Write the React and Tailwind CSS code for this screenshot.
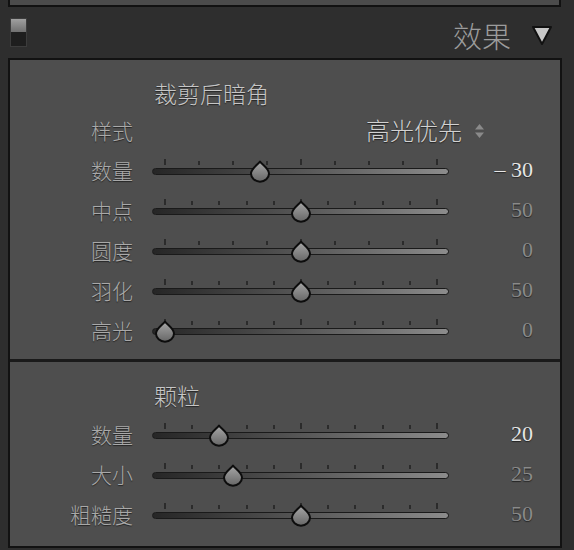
import React from "react";

const CJK = "font-['Noto_Sans_CJK_SC','Noto_Sans',sans-serif]";
const SERIF = "font-['Liberation_Serif',serif]";
const EMBOSS = "[text-shadow:0_1px_1px_rgba(0,0,0,0.55)]";

const Thumb = ({ left }) => (
  <svg
    className="absolute top-[9px]"
    style={{ left }}
    width="22"
    height="23"
    viewBox="0 0 22 23"
  >
    <defs>
      <linearGradient id="thumbFill" x1="0" y1="0" x2="0" y2="1">
        <stop offset="0" stopColor="#a8a8a8" />
        <stop offset="1" stopColor="#666666" />
      </linearGradient>
    </defs>
    <path
      d="M11 1.5 C13 4.5 20 8.5 20 13.5 A9 8.2 0 0 1 2 13.5 C2 8.5 9 4.5 11 1.5 Z"
      fill="url(#thumbFill)"
      stroke="#0d0d0d"
      strokeWidth="2"
      strokeLinejoin="round"
    />
  </svg>
);

// 刻度、滑轨、滑块
const Slider = ({ value, min, max, ticks }) => {
  const frac = (value - min) / (max - min);
  const x = 13 + frac * 272;
  const mid = (ticks - 1) / 2;
  return (
    <div className="relative h-10 w-[297px] shrink-0">
      {Array.from({ length: ticks }).map((_, i) => {
        const tx = 13 + (i * 272) / (ticks - 1);
        const tall = i === 0 || i === ticks - 1 || i === mid;
        return (
          <div
            key={i}
            className={`absolute w-[2px] bg-[#2b2b2b] ${tall ? "top-[8px] h-[6px]" : "top-[10px] h-[4px]"}`}
            style={{ left: tx - 1 }}
          />
        );
      })}
      <div className="absolute left-0 right-0 top-[17px] h-[7px] rounded-full border border-[#1a1a1a] bg-linear-to-r from-[#262626] to-[#8c8c8c]" />
      <Thumb left={x - 11} />
    </div>
  );
};

const SliderRow = ({ label, value, display, min, max, ticks, active }) => (
  <div className="flex h-10 items-center">
    <div className={`w-[123px] pb-[2px] text-right text-[21px] font-light leading-none text-[#a9a9a9] ${CJK} ${EMBOSS}`}>
      {label}
    </div>
    <div className="ml-[19px]">
      <Slider value={value} min={min} max={max} ticks={ticks} />
    </div>
    <div
      className={`w-[84px] pb-[2px] text-right text-[22px] leading-none ${SERIF} ${
        active ? "text-[#e6e6e6]" : "text-[#8a8a8a]"
      } ${EMBOSS}`}
    >
      {display ?? value}
    </div>
  </div>
);

const vignette = [
  { label: "数量", value: -30, display: "– 30", min: -100, max: 100, ticks: 9, active: true },
  { label: "中点", value: 50, min: 0, max: 100, ticks: 11 },
  { label: "圆度", value: 0, min: -100, max: 100, ticks: 9 },
  { label: "羽化", value: 50, min: 0, max: 100, ticks: 11 },
  { label: "高光", value: 0, min: 0, max: 100, ticks: 11 },
];

const grain = [
  { label: "数量", value: 20, min: 0, max: 100, ticks: 11, active: true },
  { label: "大小", value: 25, min: 0, max: 100, ticks: 11 },
  { label: "粗糙度", value: 50, min: 0, max: 100, ticks: 11 },
];

const App = () => {
  return (
    <div className={`h-[550px] w-[574px] overflow-hidden bg-[#2e2e2e] ${CJK}`}>
      {/* 上一个面板的底边 */}
      <div className="ml-[8px] h-[7px] w-[553px] border-x-2 border-b-2 border-[#111] bg-[#4b4b4b]" />

      {/* 标题栏 */}
      <div className="flex h-[51px] items-center pl-[10px] pr-[21px]">
        <div className="flex h-[29px] w-[17px] flex-col border border-[#3c3c3c] bg-[#1e1e1e]">
          <div className="h-[13px] bg-linear-to-b from-[#a0a0a0] to-[#707070]" />
        </div>
        <div className="flex-1" />
        <div className="mt-[6px] flex items-center">
          <span className="text-[29px] font-light leading-none text-[#9c9c9c]">效果</span>
          <svg className="ml-[20px]" width="22" height="21" viewBox="0 0 22 21">
            <path
              d="M2 2 L20 2 L11 19 Z"
              fill="#c9c9c9"
              stroke="#111"
              strokeWidth="2"
              strokeLinejoin="round"
            />
          </svg>
        </div>
      </div>

      {/* 主面板 */}
      <div className="ml-[8px] w-[554px] border-2 border-[#121212] bg-[#4e4e4e]">
        <div className="pb-[8px] pt-[19px]">
          <div className={`h-[28px] pl-[144px] text-[23px] font-light leading-[28px] text-[#c6c6c6] ${EMBOSS}`}>
            裁剪后暗角
          </div>
          <div className="mt-[4px] flex h-10 items-center">
            <div className={`w-[123px] pb-[2px] text-right text-[21px] font-light leading-none text-[#a9a9a9] ${EMBOSS}`}>
              样式
            </div>
            <div className="ml-[19px] flex w-[333px] items-center justify-end gap-[12px]">
              <span className={`pb-[2px] text-[24px] font-light leading-none text-[#d2d2d2] ${EMBOSS}`}>高光优先</span>
              <svg width="11" height="16" viewBox="0 0 11 16">
                <path d="M5.5 1 L10 6.5 L1 6.5 Z" fill="#8a8a8a" />
                <path d="M5.5 15 L10 9.5 L1 9.5 Z" fill="#8a8a8a" />
              </svg>
            </div>
          </div>
          {vignette.map((row) => (
            <SliderRow key={row.label} {...row} />
          ))}
        </div>

        <div className="border-t-[3px] border-[#1a1a1a] pb-[11px] pt-[19px]">
          <div className={`h-[28px] pl-[144px] text-[23px] font-light leading-[28px] text-[#c6c6c6] ${EMBOSS}`}>
            颗粒
          </div>
          <div className="h-[6px]" />
          {grain.map((row) => (
            <SliderRow key={row.label} {...row} />
          ))}
        </div>
      </div>
    </div>
  );
};

export default App;
